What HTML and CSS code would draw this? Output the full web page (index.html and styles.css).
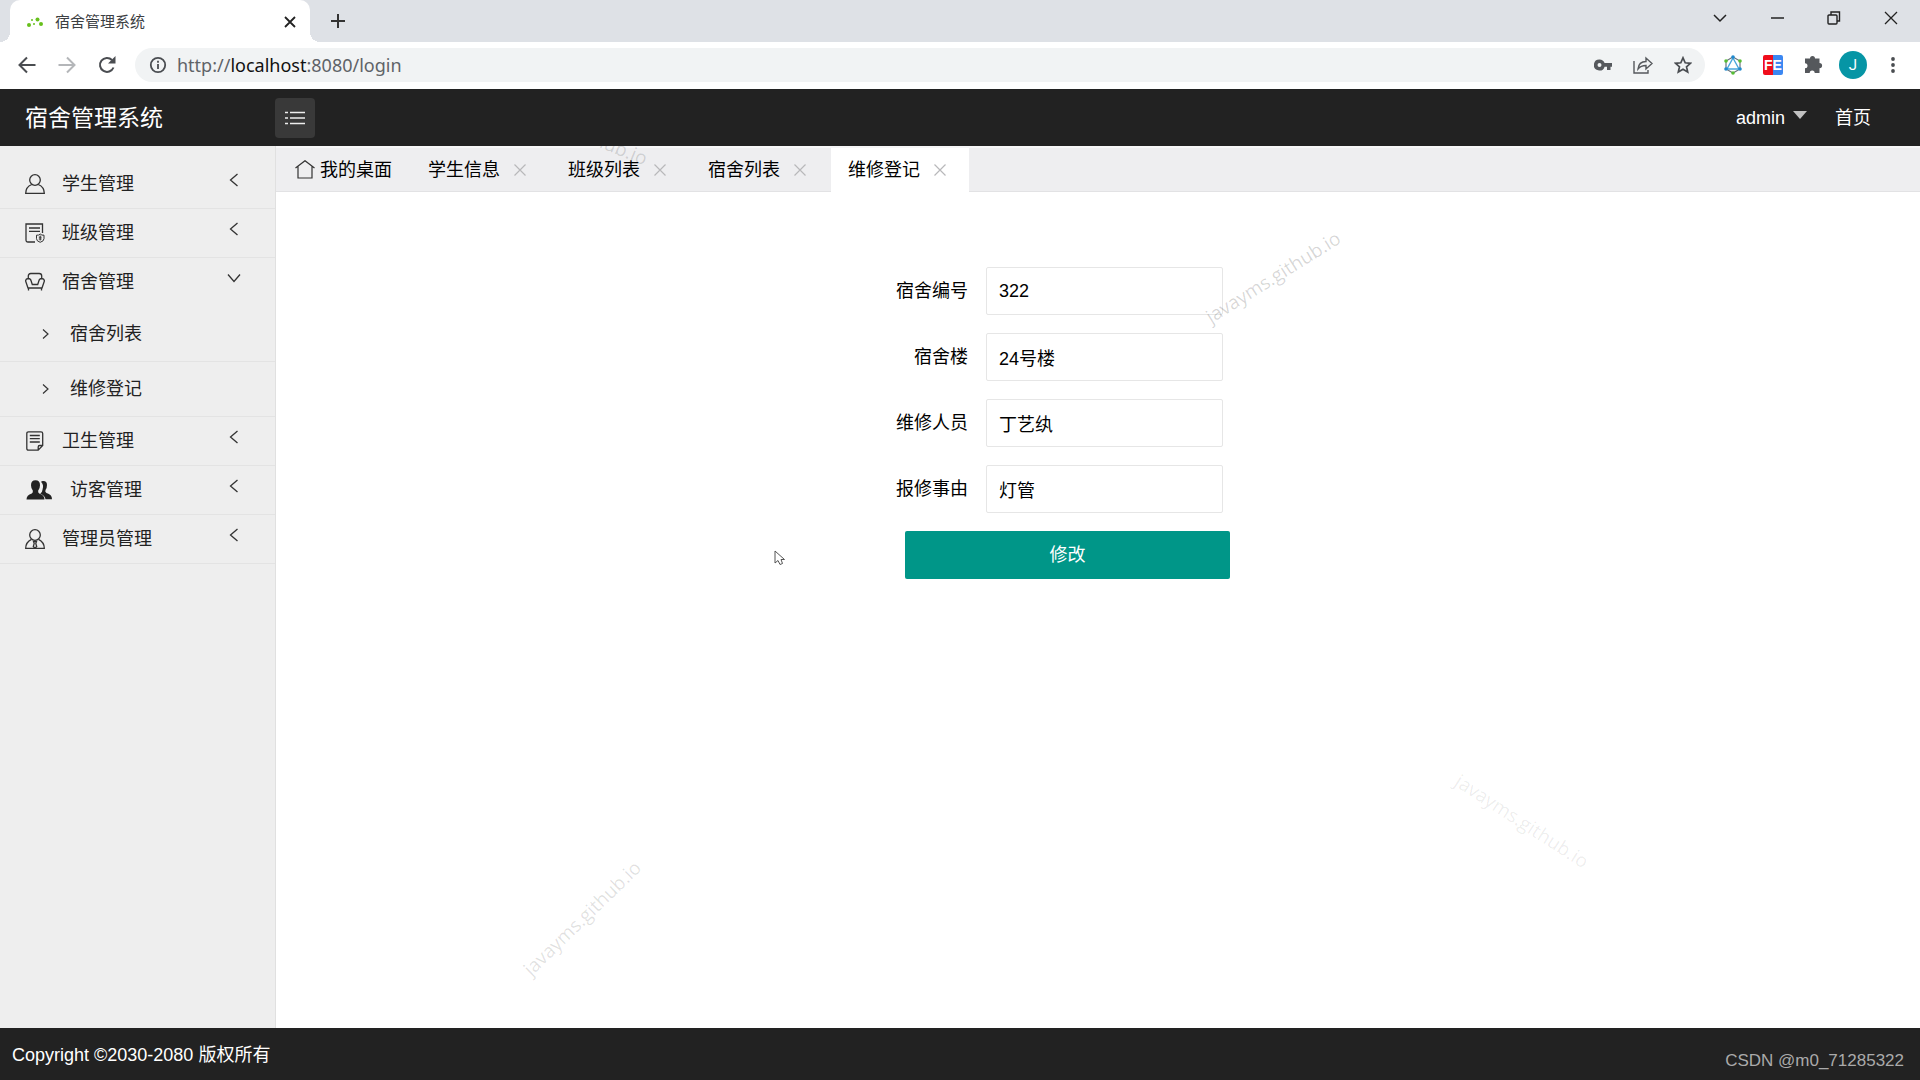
FILE: index.html
```html
<!DOCTYPE html>
<html lang="zh-CN">
<head>
<meta charset="utf-8">
<title>宿舍管理系统</title>
<link rel="stylesheet" href="styles.css">
</head>
<body>
<div class="tabstrip">
  <div class="browser-tab">
    <svg class="favicon" width="16" height="16" viewBox="0 0 16 16" fill="#67c01c"><circle cx="2" cy="11" r="2"/><circle cx="5" cy="6" r="1"/><circle cx="7" cy="10" r="1"/><circle cx="10.500" cy="5.500" r="2"/><circle cx="14" cy="10" r="2"/></svg>
    <span class="browser-title">宿舍管理系统</span>
    <button class="icon-btn tab-x" aria-label="关闭标签页"><svg width="12" height="12" viewBox="0 0 12 12" fill="none" stroke="#222" stroke-width="1.800"><path d="M1 1l10 10M11 1L1 11"/></svg></button>
  </div>
  <button class="icon-btn new-tab" aria-label="新标签页"><svg width="16" height="16" viewBox="0 0 16 16" fill="none" stroke="#333" stroke-width="2"><path d="M8 1v14M1 8h14"/></svg></button>
  <div class="window-controls">
    <button class="icon-btn win" aria-label="搜索标签页"><svg width="14" height="14" viewBox="0 0 14 14" fill="none" stroke="#222" stroke-width="1.500"><path d="M1 4l6 6 6-6"/></svg></button>
    <button class="icon-btn win" aria-label="最小化"><svg width="14" height="14" viewBox="0 0 14 14" fill="none" stroke="#222" stroke-width="1.500"><path d="M1 7h13"/></svg></button>
    <button class="icon-btn win" aria-label="还原"><svg width="14" height="14" viewBox="0 0 14 14" fill="none" stroke="#222" stroke-width="1.400"><rect x="1" y="4" width="9" height="9" rx="1"/><path d="M4 4V1h8.500v9H10"/></svg></button>
    <button class="icon-btn win" aria-label="关闭"><svg width="14" height="14" viewBox="0 0 14 14" fill="none" stroke="#222" stroke-width="1.300"><path d="M1 1l12 12M13 1L1 13"/></svg></button>
  </div>
</div>
<div class="toolbar">
  <div class="nav-buttons">
    <button class="icon-btn tool" aria-label="后退"><svg width="18" height="18" viewBox="0 0 18 18" fill="none" stroke="#4a4d51" stroke-width="2"><path d="M17.500 9H2M9 1.500L1.500 9 9 16.500"/></svg></button>
    <button class="icon-btn tool" aria-label="前进"><svg width="18" height="18" viewBox="0 0 18 18" fill="none" stroke="#b4b6b9" stroke-width="2"><path d="M.5 9H16M9 1.500L16.500 9 9 16.500"/></svg></button>
    <button class="icon-btn tool" aria-label="重新加载"><svg width="18" height="18" viewBox="0 0 18 18" fill="none" stroke="#4a4d51" stroke-width="2"><path d="M15.500 11.500A7 7 0 1 1 14 4"/><path d="M17.500 0v7.500H10z" fill="#4a4d51" stroke="none"/></svg></button>
  </div>
  <div class="omnibox">
    <svg width="18" height="18" viewBox="0 0 18 18" fill="none" stroke="#4a4d51" stroke-width="1.800"><circle cx="9" cy="9" r="7.200"/><path d="M9 8v5M9 4.800v2"/></svg>
    <span class="url">http://<b>localhost</b>:8080/login</span>
    <div class="omni-actions">
      <button class="icon-btn omni" aria-label="密码"><svg width="18" height="12" viewBox="0 0 18 12" fill="#55585c"><path fill-rule="evenodd" d="M5.500.5a5.500 5.500 0 1 0 5.100 7.200H13V11h3.500V7.700H18V4H10.600A5.500 5.500 0 0 0 5.500.5zm0 3.500a2 2 0 1 1 0 4 2 2 0 0 1 0-4z"/></svg></button>
      <button class="icon-btn omni" aria-label="分享"><svg width="20" height="18" viewBox="0 0 20 18" fill="none" stroke="#55585c" stroke-width="1.400"><path d="M1 5v12h14v-3M5 13c.5-5 3.500-7.500 8-7.500V2l6 5.500-6 5.500V9.500c-4 0-6 1-8 3.500z"/></svg></button>
      <button class="icon-btn omni" aria-label="收藏"><svg width="18" height="18" viewBox="0 0 18 18" fill="none" stroke="#4a4d51" stroke-width="1.700"><path d="M9 1.800l2.200 5 5.300.5-4 3.500 1.200 5.300L9 13.300l-4.700 2.800 1.200-5.300-4-3.500 5.300-.5z"/></svg></button>
    </div>
  </div>
  <div class="extensions">
    <button class="icon-btn tool" aria-label="扩展一"><svg width="18" height="20" viewBox="0 0 18 20" fill="none"><path d="M9 2l7 4v8l-7 4-7-4V6z" stroke="#68747c" stroke-width="1.200"/><path d="M9 3l6 11H3z" stroke="#4aa7dc" stroke-width="1.400"/><g fill="#57bd35"><circle cx="2" cy="6" r="1.800"/><circle cx="16" cy="6" r="1.800"/><circle cx="9" cy="18" r="1.800"/></g><g fill="#2089ce"><circle cx="9" cy="2" r="1.800"/><circle cx="2" cy="14" r="1.800"/><circle cx="16" cy="14" r="1.800"/></g></svg></button>
    <button class="icon-btn tool" aria-label="FE 助手"><span class="fe">FE</span></button>
    <button class="icon-btn tool" aria-label="扩展程序"><svg width="19" height="19" viewBox="0 0 19 19" fill="#55585c"><path d="M6 3.500a2.500 2.500 0 0 1 5 0h4.500V8a2.600 2.600 0 0 1 0 5.200V18h-4.800a2.500 2.500 0 0 0-5 0H1v-4.800a2.500 2.500 0 0 0 0-5V3.500z"/></svg></button>
    <button class="icon-btn tool" aria-label="用户"><span class="avatar">J</span></button>
    <button class="icon-btn tool" aria-label="菜单"><svg width="4" height="16" viewBox="0 0 4 16" fill="#4a4d51"><circle cx="2" cy="2" r="1.900"/><circle cx="2" cy="8" r="1.900"/><circle cx="2" cy="14" r="1.900"/></svg></button>
  </div>
</div>

<header class="header">
  <h1 class="brand">宿舍管理系统</h1>
  <button class="icon-btn menu-toggle" aria-label="收起菜单"><svg width="20" height="14" viewBox="0 0 20 14" fill="none" stroke="#eee" stroke-width="1.300"><path d="M0 1.500h3M5 1.500h15M0 7h3M5 7h15M0 12.500h3M5 12.500h15"/></svg></button>
  <nav class="header-links">
    <a href="#" class="user">admin<span class="caret"></span></a>
    <a href="#">首页</a>
  </nav>
</header>

<div class="body">
  <nav class="sidebar">
    <a href="#" class="item"><svg class="item-icon" viewBox="0 0 20 20"><circle cx="10" cy="6" r="5.300"/><path d="M6.800 10.500C3 12 .7 15 .7 19.300h18.600c0-4.300-2.300-7.300-6.100-8.800"/></svg><span>学生管理</span><svg class="arrow" viewBox="0 0 14 14"><path d="M10.500 1l-7 6 7 6"/></svg></a>
    <a href="#" class="item"><svg class="item-icon" viewBox="0 0 20 20"><path d="M10 19H3Q1 19 1 17V1h16.500v9M4 5h11M4 8.300h11"/><path d="M11.500 12.200q2.300.3 3.700-1.200 1.500 1.500 3.800 1.200v3.500q0 2.500-3.800 3.600-3.700-1.100-3.700-3.600zM15.200 12.500v5M13.800 14.200h2.800M13.800 16h2.800" stroke-width="1"/></svg><span>班级管理</span><svg class="arrow" viewBox="0 0 14 14"><path d="M10.500 1l-7 6 7 6"/></svg></a>
    <a href="#" class="item open"><svg class="item-icon" viewBox="0 0 20 20"><path d="M3.300 7V4q0-2.500 2.500-2.500h8.400q2.500 0 2.500 2.500v3M3.300 6.500q2.500 0 3 3l1 3h5.400l1-3q.5-3 3-3 2.700.2 2.700 2.500L17 16H3L.6 9Q.6 6.700 3.300 6.500zM3.500 16v2.500M16.500 16v2.500"/></svg><span>宿舍管理</span><svg class="arrow" viewBox="0 0 14 14"><path d="M1 3.500l6 7 6-7"/></svg></a>
    <a href="#" class="item sub"><svg class="sub-arrow" viewBox="0 0 10 10"><path d="M3 0.500l5 4.500-5 4.500"/></svg><span>宿舍列表</span></a>
    <a href="#" class="item sub"><svg class="sub-arrow" viewBox="0 0 10 10"><path d="M3 0.500l5 4.500-5 4.500"/></svg><span>维修登记</span></a>
    <a href="#" class="item"><svg class="item-icon" viewBox="0 0 20 20"><path d="M3.500.8h12.500q1.700 0 1.700 1.700v12l-4.500 4.700H3.500q-1.700 0-1.700-1.700v-15Q1.800.8 3.500.8zM4.800 4.500h10M4.800 7.700h10M4.800 11h10M17.700 14.500h-3q-1.500 0-1.500 1.500v3.200"/></svg><span>卫生管理</span><svg class="arrow" viewBox="0 0 14 14"><path d="M10.500 1l-7 6 7 6"/></svg></a>
    <a href="#" class="item"><svg class="item-icon people" viewBox="0 0 26 20"><path d="M16.500 1q4.500-.5 4.500 4 0 3-1.500 5-.8 2 1 3 5.500 1.500 5.500 6.200h-6.500q-.5-4-5.200-5.500 2-1.500 2.200-4Q18.200 5 15 1.800z"/><path d="M9.500.2q4.500 0 4.500 5 0 3-1.800 5.300-.5 2.200 1 3Q18.500 15 18.500 19.500H.5q0-4.500 5.300-6 1.500-.8 1-3Q5 8.200 5 5.200q0-5 4.500-5z"/></svg><span>访客管理</span><svg class="arrow" viewBox="0 0 14 14"><path d="M10.500 1l-7 6 7 6"/></svg></a>
    <a href="#" class="item"><svg class="item-icon" viewBox="0 0 20 20"><circle cx="10" cy="6" r="5.300"/><path d="M6.500 10.300C3 12 .7 15 .7 19.300h18.600c0-4.300-2.300-7.300-5.800-9M8.500 12.500h3l-.7 2 .9 3-1.700 1.500-1.700-1.500.9-3z"/></svg><span>管理员管理</span><svg class="arrow" viewBox="0 0 14 14"><path d="M10.500 1l-7 6 7 6"/></svg></a>
  </nav>

  <main class="main">
    <div class="tabs">
      <a href="#" class="tab home"><svg width="20" height="20" viewBox="0 0 20 20" fill="none" stroke="#333" stroke-width="1.200"><path d="M.5 8L10 .7 19.500 8M3 6.500V18h14V6.500"/></svg>我的桌面</a>
      <div class="tab"><a href="#">学生信息</a><button class="icon-btn close" aria-label="关闭学生信息"><svg width="12" height="12" viewBox="0 0 12 12"><path d="M.5.5l11 11M11.500.5l-11 11"/></svg></button></div>
      <div class="tab"><a href="#">班级列表</a><button class="icon-btn close" aria-label="关闭班级列表"><svg width="12" height="12" viewBox="0 0 12 12"><path d="M.5.5l11 11M11.500.5l-11 11"/></svg></button></div>
      <div class="tab"><a href="#">宿舍列表</a><button class="icon-btn close" aria-label="关闭宿舍列表"><svg width="12" height="12" viewBox="0 0 12 12"><path d="M.5.5l11 11M11.500.5l-11 11"/></svg></button></div>
      <div class="tab active"><a href="#">维修登记</a><button class="icon-btn close" aria-label="关闭维修登记"><svg width="12" height="12" viewBox="0 0 12 12"><path d="M.5.5l11 11M11.500.5l-11 11"/></svg></button></div>
    </div>
    <form class="form">
      <label for="room">宿舍编号</label><input id="room" type="text" value="322">
      <label for="building">宿舍楼</label><input id="building" type="text" value="24号楼">
      <label for="worker">维修人员</label><input id="worker" type="text" value="丁艺纨">
      <label for="reason">报修事由</label><input id="reason" type="text" value="灯管">
      <button type="button" class="submit">修改</button>
    </form>
  </main>
</div>

<footer class="footer">
  <span>Copyright ©2030-2080 版权所有</span>
  <span class="credit">CSDN @m0_71285322</span>
</footer>

<div class="watermark wm-top">javayms.github.io</div>
<div class="watermark wm-form">javayms.github.io</div>
<div class="watermark wm-left">javayms.github.io</div>
<div class="watermark wm-right">javayms.github.io</div>
<svg class="cursor" width="12" height="16" viewBox="0 0 12 16" fill="#fff" stroke="#555" stroke-width="1"><path d="M1 1v12l3-2.500 2 4 2.500-1L7 9.500h3.500z"/></svg>
</body>
</html>
```
FILE: styles.css
```css
* {
  box-sizing: border-box;
}

body {
  margin: 0;
  min-height: 100vh;
  display: flex;
  flex-direction: column;
  position: relative;
  overflow-x: hidden;
  background: #fff;
  color: #000;
  font: 18px/24px "Liberation Sans", "Noto Sans CJK SC", sans-serif;
}

a {
  color: inherit;
  text-decoration: none;
}

.icon-btn {
  display: flex;
  align-items: center;
  justify-content: center;
  padding: 0;
  border: 0;
  background: none;
}

/* Browser tab strip */
.tabstrip {
  display: flex;
  height: 42px;
  padding: 0 1px 0 10px;
  background: #dee1e6;
}

.browser-tab {
  position: relative;
  display: flex;
  align-items: center;
  width: 300px;
  padding: 2px 14px 0 17px;
  border-radius: 10px 10px 0 0;
  background: #fff;
}

.browser-tab::before,
.browser-tab::after {
  content: "";
  position: absolute;
  bottom: 0;
  width: 10px;
  height: 10px;
}

.browser-tab::before {
  right: 100%;
  background: radial-gradient(circle at 0 0, #dee1e6 10px, #fff 10px);
}

.browser-tab::after {
  left: 100%;
  background: radial-gradient(circle at 100% 0, #dee1e6 10px, #fff 10px);
}

.browser-title {
  margin-left: 12px;
  color: #3c4043;
  font-size: 15px;
}

.tab-x {
  width: 12px;
  margin-left: auto;
}

.new-tab {
  margin-left: 20px;
}

.window-controls {
  display: flex;
  margin-left: auto;
  padding-bottom: 6px;
}

.win {
  width: 57px;
}

/* Browser toolbar */
.toolbar {
  display: flex;
  align-items: center;
  gap: 13px;
  height: 47px;
  padding: 0 12px 2px;
}

.nav-buttons,
.extensions {
  display: flex;
  gap: 10px;
}

.tool {
  width: 30px;
  height: 30px;
}

.omnibox {
  flex: 1;
  display: flex;
  align-items: center;
  height: 34px;
  padding: 0 10px 0 14px;
  border-radius: 17px;
  background: #f1f3f4;
}

.url {
  margin-left: 10px;
  color: #5f6368;
  font-family: "Noto Sans", sans-serif;
}

.url b {
  color: #111;
  font-weight: 400;
}

.omni-actions {
  display: flex;
  gap: 16px;
  margin-left: auto;
}

.omni {
  width: 24px;
  height: 24px;
}

.fe {
  width: 20px;
  height: 20px;
  border-radius: 2px;
  background: linear-gradient(90deg, #f00d1b 50%, #3b87f2 50%);
  color: #fff;
  font: 700 14px/20px "Liberation Sans", sans-serif;
}

.avatar {
  width: 28px;
  height: 28px;
  border-radius: 50%;
  background: #0695a5;
  color: #fff;
  font: 15px/28px Roboto, sans-serif;
}

/* Application header */
.header {
  position: relative;
  z-index: 1;
  display: flex;
  align-items: center;
  height: 57px;
  padding: 0 49px 0 25px;
  background: #222;
  color: #fff;
}

.brand {
  width: 250px;
  margin: 0;
  font-size: 23px;
  font-weight: 400;
}

.menu-toggle {
  width: 40px;
  height: 40px;
  border-radius: 4px;
  background: #393939;
}

.header-links {
  display: flex;
  gap: 28px;
  margin-left: auto;
}

.user {
  display: flex;
  align-items: center;
  gap: 8px;
}

.caret {
  margin-bottom: 6px;
  border: 7px solid transparent;
  border-top: 8px solid #c2c2c2;
  border-bottom: 0;
}

/* Sidebar */
.body {
  flex: 1;
  display: flex;
}

.sidebar {
  width: 276px;
  padding-top: 14px;
  border-right: 1px solid #e0e0e0;
  background: #eee;
  color: #222;
}

.item {
  display: flex;
  align-items: center;
  height: 49px;
  padding: 0 34px 0 25px;
  border-bottom: 1px solid #e3e3e3;
}

.item.open {
  border-bottom-color: transparent;
}

.item.sub {
  height: 55px;
  padding-left: 40px;
}

.item-icon {
  width: 20px;
  height: 20px;
  margin-right: 17px;
  fill: none;
  stroke: #333;
  stroke-width: 1.3px;
}

.item-icon.people {
  width: 28px;
  fill: #222;
  stroke: none;
}

.arrow {
  width: 14px;
  height: 14px;
  margin: 0 0 8px auto;
  fill: none;
  stroke: #333;
  stroke-width: 1.3px;
}

.sub-arrow {
  width: 10px;
  height: 10px;
  margin-right: 20px;
  fill: none;
  stroke: #333;
  stroke-width: 1.2px;
}

/* Content tabs */
.main {
  flex: 1;
}

.tabs {
  display: flex;
  height: 46px;
  border-top: 2px solid #f6f6f7;
  border-bottom: 1px solid #e2e2e4;
  background: #eeeef0;
}

.tab {
  display: flex;
  align-items: center;
  gap: 14px;
  width: 140px;
  height: 44px;
  padding-left: 17px;
}

.tab.home {
  width: 135px;
  padding-left: 19px;
  gap: 5px;
}

.tab.active {
  width: 138px;
  background: #fff;
}

.close svg {
  fill: none;
  stroke: #b8b8ba;
  stroke-width: 1.2px;
}

/* Repair form */
.form {
  display: grid;
  grid-template-columns: 94px 237px;
  gap: 18px;
  width: 448px;
  margin: 75px auto 0;
}

.form label {
  align-self: center;
  text-align: right;
}

.form input {
  height: 48px;
  padding: 0 12px;
  border: 1px solid #e6e6e6;
  border-radius: 2px;
  background: #fff;
  color: #000;
  font: inherit;
}

.submit {
  grid-column: 1 / -1;
  width: 325px;
  height: 48px;
  margin-left: 31px;
  border: 0;
  border-radius: 2px;
  background: #009688;
  color: #fff;
  font: inherit;
}

/* Footer */
.footer {
  display: flex;
  align-items: center;
  justify-content: space-between;
  height: 52px;
  padding: 2px 16px 0 12px;
  background: #222;
  color: #fff;
}

.credit {
  padding-top: 12px;
  color: #aaa;
  font-size: 17px;
}

/* Overlays */
.watermark {
  position: absolute;
  width: 160px;
  text-align: center;
  white-space: nowrap;
  font-family: "Open Sans", sans-serif;
  font-size: 19px;
  pointer-events: none;
}

.wm-top {
  left: 495px;
  top: 118px;
  color: rgba(0, 0, 0, 0.14);
  transform: rotate(22deg);
}

.wm-form {
  left: 1193px;
  top: 265px;
  color: rgba(0, 0, 0, 0.16);
  transform: rotate(-32deg);
}

.wm-left {
  left: 502px;
  top: 906px;
  color: rgba(0, 0, 0, 0.12);
  transform: rotate(-44deg);
}

.wm-right {
  left: 1442px;
  top: 809px;
  color: rgba(0, 0, 0, 0.08);
  transform: rotate(33deg);
}

.cursor {
  position: absolute;
  left: 774px;
  top: 550px;
}
```
